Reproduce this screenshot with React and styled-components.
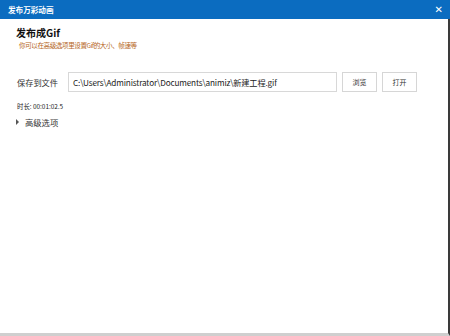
import React from 'react';
import styled, { createGlobalStyle } from 'styled-components';

const Global = createGlobalStyle`
  html, body { margin: 0; padding: 0; background: #fff; }
  body {
    width: 450px;
    height: 336px;
    overflow: hidden;
    font-family: "Microsoft YaHei", "Noto Sans CJK SC", "Noto Sans", sans-serif;
  }
`;

const Window = styled.div`
  width: 450px;
  height: 336px;
  display: flex;
  flex-direction: column;
  box-sizing: border-box;
  border-right: 2px solid #3a3a3a;
  border-bottom: 3px solid #cfcfcf;
  background: #fff;
`;

const TitleBar = styled.div`
  height: 19px;
  flex: none;
  background: #0b6cc0;
  display: flex;
  align-items: center;
  justify-content: space-between;
  padding: 0 7px 0 8px;
  margin-right: -2px;
`;

const Title = styled.span`
  color: #fff;
  font-size: 7.6px;
  font-weight: 700;
`;

const Close = styled.span`
  color: #fff;
  font-size: 10px;
  font-weight: 700;
  font-family: "DejaVu Sans", sans-serif;
  line-height: 1;
`;

const Body = styled.div`
  flex: 1;
  padding: 7px 0 0 16px;
  display: flex;
  flex-direction: column;
`;

const Heading = styled.div`
  font-size: 10px;
  font-weight: 700;
  color: #111;
  line-height: 13px;
`;

const Hint = styled.div`
  font-size: 6.6px;
  letter-spacing: -0.45px;
  color: #b5661d;
  line-height: 11px;
  margin: 1px 0 0 3px;
`;

const Row = styled.div`
  display: flex;
  align-items: center;
  margin-top: 21px;
  height: 20px;
`;

const Label = styled.span`
  font-size: 8.2px;
  color: #333;
  width: 51px;
  margin-left: 1px;
`;

const PathBox = styled.div`
  width: 269px;
  height: 20px;
  box-sizing: border-box;
  border: 1px solid #d8d8d8;
  display: flex;
  align-items: center;
  padding-left: 4px;
  font-size: 8.2px;
  letter-spacing: -0.15px;
  color: #222;
  white-space: nowrap;
  overflow: hidden;
`;

const Button = styled.div`
  width: ${p => p.w}px;
  height: 20px;
  box-sizing: border-box;
  border: 1px solid #d6d6d6;
  margin-left: ${p => p.ml}px;
  display: flex;
  align-items: center;
  justify-content: center;
  font-size: 7px;
  color: #333;
  background: #fff;
`;

const Duration = styled.div`
  font-size: 6.4px;
  color: #222;
  margin: 10px 0 0 1px;
  line-height: 10px;
`;

const Advanced = styled.div`
  display: flex;
  align-items: center;
  margin-top: 4px;
  font-size: 8.3px;
  color: #333;
`;

const Arrow = styled.span`
  width: 0;
  height: 0;
  border-top: 3px solid transparent;
  border-bottom: 3px solid transparent;
  border-left: 3px solid #555;
  margin-right: 6px;
`;

export default function App() {
  return (
    <>
      <Global />
      <Window>
        <TitleBar>
          <Title>发布万彩动画</Title>
          <Close>✕</Close>
        </TitleBar>
        <Body>
          <Heading>发布成Gif</Heading>
          <Hint>你可以在高级选项里设置Gif的大小、帧速等</Hint>
          <Row>
            <Label>保存到文件</Label>
            <PathBox>C:\Users\Administrator\Documents\animiz\新建工程.gif</PathBox>
            <Button w={35} ml={5}>浏览</Button>
            <Button w={35} ml={5}>打开</Button>
          </Row>
          <Duration>时长: 00:01:02.5</Duration>
          <Advanced>
            <Arrow />
            高级选项
          </Advanced>
        </Body>
      </Window>
    </>
  );
}
